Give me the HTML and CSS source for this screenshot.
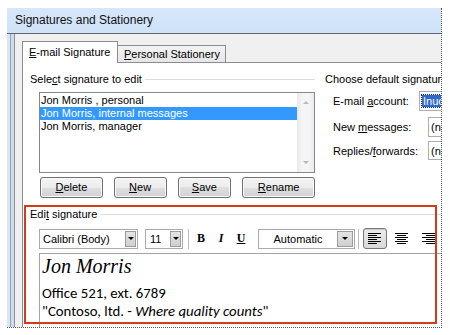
FILE: index.html
```html
<!DOCTYPE html>
<html>
<head>
<meta charset="utf-8">
<title>Signatures and Stationery</title>
<link rel="stylesheet" href="styles.css">
</head>
<body>
<div class="window">
  <div class="titlebar">Signatures and Stationery</div>
  <div class="main">
    <div class="frame-left"></div>
    <div class="content">
      <div class="tabs">
        <div class="tab active"><u>E</u>-mail Signature</div>
        <div class="tab inactive"><u>P</u>ersonal Stationery</div>
      </div>
      <div class="panel">
        <div class="top">
          <div class="left-col">
            <div class="legend"><span>Sele<u>c</u>t signature to edit</span><i class="rule"></i></div>
            <div class="listbox">
              <div class="items">
                <div class="item">Jon Morris , personal</div>
                <div class="item sel">Jon Morris, internal messages</div>
                <div class="item">Jon Morris, manager</div>
              </div>
              <div class="scrollbar">
                <span class="sb-btn"><i class="tri-up"></i></span>
                <span class="sb-btn"><i class="tri-down"></i></span>
              </div>
            </div>
            <div class="buttons">
              <button class="btn b-del"><u>D</u>elete</button>
              <button class="btn b-new"><u>N</u>ew</button>
              <button class="btn b-save"><u>S</u>ave</button>
              <button class="btn b-ren"><u>R</u>ename</button>
            </div>
          </div>
          <div class="right-col">
            <div class="legend plain">Choose default signature</div>
            <div class="field f1">
              <span class="label">E-mail <u>a</u>ccount:</span>
              <span class="box"><span class="hl">Inuc</span></span>
            </div>
            <div class="field f2">
              <span class="label">New <u>m</u>essages:</span>
              <span class="box shift">(none)</span>
            </div>
            <div class="field f3">
              <span class="label">Replies/<u>f</u>orwards:</span>
              <span class="box shift">(none)</span>
            </div>
          </div>
        </div>
        <div class="edit">
          <div class="legend"><span>Edi<u>t</u> signature</span><i class="rule"></i></div>
          <div class="toolbar">
            <span class="combo c-font"><span class="ctext">Calibri (Body)</span><span class="dd"><i class="tri-dd"></i></span></span>
            <span class="combo c-size"><span class="ctext">11</span><span class="dd"><i class="tri-dd"></i></span></span>
            <span class="sep s1"></span>
            <span class="fmt f-b">B</span>
            <span class="fmt f-i">I</span>
            <span class="fmt f-u">U</span>
            <span class="combo c-color"><span class="ctext center">Automatic</span><span class="dd"><i class="tri-dd"></i></span></span>
            <span class="sep s2"></span>
            <span class="align pressed">
              <svg width="14" height="12" viewBox="0 0 14 12"><g fill="#000"><rect x="0" y="0" width="13" height="1"/><rect x="0" y="2" width="9" height="1"/><rect x="0" y="4" width="13" height="1"/><rect x="0" y="6" width="9" height="1"/><rect x="0" y="8" width="13" height="1"/><rect x="0" y="10" width="9" height="1"/></g></svg>
            </span>
            <span class="align">
              <svg width="14" height="12" viewBox="0 0 14 12"><g fill="#000"><rect x="0" y="0" width="13" height="1"/><rect x="2" y="2" width="9" height="1"/><rect x="0" y="4" width="13" height="1"/><rect x="2" y="6" width="9" height="1"/><rect x="0" y="8" width="13" height="1"/><rect x="2" y="10" width="9" height="1"/></g></svg>
            </span>
            <span class="align">
              <svg width="14" height="12" viewBox="0 0 14 12"><g fill="#000"><rect x="0" y="0" width="13" height="1"/><rect x="4" y="2" width="9" height="1"/><rect x="0" y="4" width="13" height="1"/><rect x="4" y="6" width="9" height="1"/><rect x="0" y="8" width="13" height="1"/><rect x="4" y="10" width="9" height="1"/></g></svg>
            </span>
          </div>
          <div class="editor">
            <div class="sig-name">Jon Morris</div>
            <div class="sig-line l2">Office 521, ext. 6789</div>
            <div class="sig-line">"Contoso, ltd. - <em>Where quality counts</em>"</div>
          </div>
          <div class="annot"></div>
        </div>
      </div>
    </div>
  </div>
</div>
</body>
</html>
```
FILE: styles.css
```css
* { box-sizing: border-box; }
html, body { margin: 0; padding: 0; background: #fff; }
body {
  width: 450px;
  height: 335px;
  overflow: hidden;
  font-family: "Liberation Sans", Arial, sans-serif;
  font-size: 11px;
  color: #000;
}
u { text-decoration: underline; text-underline-offset: 1px; }

.window {
  margin: 8px 0 0 7px;
  width: 435px;
  height: 320px;
  border-right: 1px dotted #555;
  border-bottom: 1px dotted #555;
  overflow: hidden;
  display: flex;
  flex-direction: column;
}

.titlebar {
  height: 26px;
  flex: 0 0 26px;
  background: linear-gradient(#d7e7fa, #cfe2f7);
  border-bottom: 1px solid #5f636b;
  padding-left: 8px;
  font-size: 12px;
  line-height: 25px;
  color: #111;
}

.main { flex: 1; display: flex; min-height: 0; }

.frame-left {
  width: 8px;
  flex: 0 0 8px;
  background: linear-gradient(90deg, #d9e6f5 0, #d9e6f5 3px, #9aa3ad 3px, #9aa3ad 4px, #cfdcec 4px, #cfdcec 7px, #8d939b 7px);
}

.content {
  flex: 1;
  background: #f0f0f0;
  padding: 7px 0 0 7px;
  display: flex;
  flex-direction: column;
  min-width: 0;
}

.tabs { display: flex; align-items: flex-end; height: 21px; position: relative; z-index: 1; }
.tab { border: 1px solid #898c95; border-bottom: none; white-space: nowrap; }
.tab.active {
  width: 96px;
  height: 22px;
  margin-bottom: -1px;
  background: #fff;
  padding: 4px 0 0 6px;
  line-height: 13px;
}
.tab.inactive {
  width: 109px;
  height: 17px;
  margin-left: -1px;
  background: linear-gradient(#f3f3f3, #e6e6e6);
  padding: 2px 0 0 6px;
  line-height: 13px;
}

.panel {
  width: 460px;
  flex: 1;
  background: #fff;
  border: 1px solid #898c95;
}

.top { display: flex; padding-top: 10px; }
.left-col { width: 285px; margin-left: 7px; flex: 0 0 285px; }
.right-col { margin-left: 10px; flex: 0 0 140px; }

.legend { display: flex; align-items: center; height: 13px; line-height: 13px; white-space: nowrap; }
.legend .rule { flex: 1; height: 1px; background: #d5dfe5; margin-left: 3px; }

.listbox {
  margin: 6px 0 0 9px;
  width: 276px;
  height: 81px;
  border: 1px solid #828790;
  display: flex;
}
.items { flex: 1; padding-top: 1px; }
.item { height: 13px; line-height: 13px; padding-left: 1px; white-space: nowrap; }
.item.sel { background: #3399ff; color: #fff; }
.scrollbar {
  width: 17px;
  background: linear-gradient(90deg, #e9e9e9, #f5f5f5 30%, #f5f5f5 70%, #ececec);
  display: flex;
  flex-direction: column;
  justify-content: space-between;
}
.sb-btn { height: 19px; display: flex; align-items: center; justify-content: center; }
.tri-up { width: 0; height: 0; border-left: 3px solid transparent; border-right: 3px solid transparent; border-bottom: 3px solid #b8b8b8; }
.tri-down { width: 0; height: 0; border-left: 3px solid transparent; border-right: 3px solid transparent; border-top: 3px solid #b8b8b8; }

.buttons { display: flex; gap: 11px; margin: 4px 0 0 10px; }
.btn {
  height: 21px;
  padding: 0;
  border: 1px solid #707070;
  border-radius: 3px;
  background: linear-gradient(#f4f4f4 0%, #ececec 50%, #dfdfdf 50%, #d2d2d2 100%);
  box-shadow: inset 0 0 0 1px #fbfbfb;
  font-family: "Liberation Sans", Arial, sans-serif;
  font-size: 11px;
  color: #000;
  line-height: 19px;
}
.b-del { width: 63px; }
.b-new { width: 53px; }
.b-save { width: 54px; }
.b-ren { width: 73px; }

.field { display: flex; align-items: center; white-space: nowrap; }
.field .label { width: 86px; flex: 0 0 86px; margin-left: 8px; }
.field .box {
  width: 120px;
  height: 20px;
  border: 1px solid #abadb3;
  background: #fff;
  display: flex;
  align-items: center;
  padding-left: 2px;
}
.field .box.shift { margin-left: 9px; padding-left: 2px; }
.f1 { margin-top: 5px; }
.f2 { margin-top: 6px; }
.f3 { margin-top: 4px; }
.f3 .box { height: 19px; }
.hl {
  background: #3168d0;
  color: #fff;
  padding: 0 1px;
  line-height: 12px;
  outline: 1px dotted #1b2f5a;
}

.edit { position: relative; margin: 7px 0 0 1px; }
.edit > .legend { padding: 3px 0 0 6px; height: 16px; }

.toolbar {
  display: flex;
  align-items: center;
  height: 21px;
  margin: 7px 0 0 15px;
  white-space: nowrap;
}
.combo {
  height: 20px;
  border: 1px solid #a7abb0;
  background: #fff;
  display: flex;
  align-items: center;
}
.ctext { flex: 1; padding-left: 3px; }
.ctext.center { text-align: center; padding-left: 0; }
.dd {
  width: 11px;
  height: 16px;
  margin-right: 1px;
  background: linear-gradient(#e4e4e4, #cfcfcf);
  border: 1px solid #9c9c9c;
  display: flex;
  align-items: center;
  justify-content: center;
}
.c-color .dd { width: 16px; }
.tri-dd { width: 0; height: 0; border-left: 3px solid transparent; border-right: 3px solid transparent; border-top: 3px solid #000; }
.c-font { width: 99px; }
.c-size { width: 38px; margin-left: 7px; }
.c-size .ctext { padding-left: 4px; }
.c-color { width: 97px; margin-left: 7px; }
.sep { width: 1px; height: 20px; background: #b9bcc1; }
.s1 { margin-left: 5px; margin-right: 2px; }
.s2 { margin-left: 3px; margin-right: 4px; }
.fmt {
  width: 20px;
  text-align: center;
  font-family: "Liberation Serif", "Times New Roman", serif;
  font-weight: bold;
  font-size: 12px;
}
.f-i { font-style: italic; }
.f-u { text-decoration: underline; }
.align {
  width: 24px;
  height: 21px;
  display: flex;
  align-items: center;
  justify-content: center;
  margin-right: 3px;
}
.align.pressed {
  border: 1px solid #777;
  border-radius: 3px;
  background: linear-gradient(#ececec, #d9d9d9);
  box-shadow: inset 0 1px 1px rgba(0,0,0,0.15);
}

.editor {
  margin: 4px 0 0 15px;
  height: 90px;
  border-top: 1px solid #a3a3a3;
  border-left: 1px solid #a3a3a3;
  padding: 1px 0 0 2px;
  background: #fff;
}
.sig-name {
  font-family: "Liberation Serif", "Times New Roman", serif;
  font-style: italic;
  font-size: 20px;
  line-height: 22px;
}
.sig-line {
  font-family: Carlito, Lato, "Liberation Sans", sans-serif;
  font-size: 14.8px;
  line-height: 18px;
  white-space: nowrap;
}
.sig-line.l2 { margin-top: 7px; }
.sig-line em { font-style: italic; }

.annot {
  position: absolute;
  left: 0;
  top: 0;
  width: 413px;
  height: 119px;
  border: 2px solid #cf3d1b;
  pointer-events: none;
}
```
